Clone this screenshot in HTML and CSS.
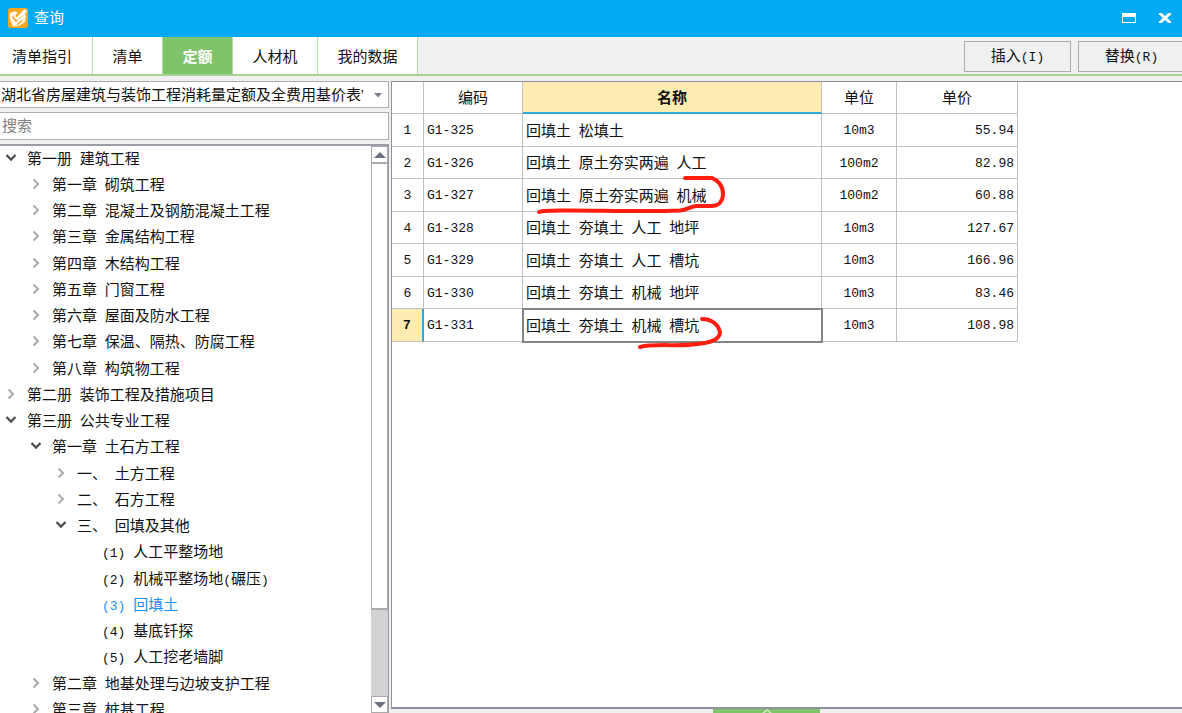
FILE: index.html
```html
<!DOCTYPE html>
<html lang="zh-CN">
<head>
<meta charset="utf-8">
<title>查询</title>
<link rel="stylesheet" href="styles.css">
</head>
<body>
<div class="window">
  <header class="titlebar">
    <svg class="logo" viewBox="0 0 20 20" aria-hidden="true">
      <rect width="20" height="20" rx="3" fill="#f9a51c"/>
      <path d="M2 5 7 3 10 4.500 7.500 7.500 9 10.500 15 4.500 18 7 17 14 11 18 5 18.500 2.500 13 1.500 9Z" fill="#fff6e6"/>
      <path d="M4.500 8.500 8 13 15.500 6.500M9 17 14 12.500" fill="none" stroke="#f6a023" stroke-width="1.300"/>
      <path d="M16.500 1 19 3.500 10.500 11.500 8.500 12 8.500 9.500Z" fill="#fff"/>
    </svg>
    <h1 class="title">查询</h1>
    <button class="winbtn" aria-label="最大化"><svg width="14" height="10" viewBox="0 0 14 10"><path d="M0 0H14V10H0ZM1 4V9H13V4Z" fill="#fff" fill-rule="evenodd"/></svg></button>
    <button class="winbtn" aria-label="关闭"><svg width="14" height="10" viewBox="0 0 14 10"><path d="M1.500 0 12.500 10M12.500 0 1.500 10" stroke="#fff" stroke-width="3"/></svg></button>
  </header>

  <nav class="toolbar">
    <button class="tab tab-guide">清单指引</button>
    <button class="tab tab-short">清单</button>
    <button class="tab tab-short active">定额</button>
    <button class="tab tab-mid">人材机</button>
    <button class="tab tab-long">我的数据</button>
    <div class="actions">
      <button class="action">插入<span class="mono">(I)</span></button>
      <button class="action">替换<span class="mono">(R)</span></button>
    </div>
  </nav>

  <main class="content">
    <aside class="sidebar">
      <div class="picker">
        <select class="library" aria-label="定额库"><option>湖北省房屋建筑与装饰工程消耗量定额及全费用基价表'</option></select>
        <svg class="caret" width="8" height="5" viewBox="0 0 8 5" aria-hidden="true"><path d="M0 0H8L4 4.500Z" fill="#7b7f8a"/></svg>
      </div>
      <input class="search" type="text" placeholder="搜索" aria-label="搜索">
      <div class="treebox">
        <svg class="defs" width="0" height="0" aria-hidden="true">
          <symbol id="open" viewBox="0 0 12 12"><path d="M1.500 3 6 7.500 10.500 3" fill="none" stroke="#4d4d4d" stroke-width="2.300"/></symbol>
          <symbol id="shut" viewBox="0 0 12 12"><path d="M3.500 1.500 8 6 3.500 10.500" fill="none" stroke="#ababab" stroke-width="2"/></symbol>
        </svg>
        <ul class="tree">
          <li class="l0"><svg class="chev"><use href="#open"/></svg>第一册 <span class="part">建筑工程</span></li>
          <li class="l1"><svg class="chev"><use href="#shut"/></svg>第一章 <span class="part">砌筑工程</span></li>
          <li class="l1"><svg class="chev"><use href="#shut"/></svg>第二章 <span class="part">混凝土及钢筋混凝土工程</span></li>
          <li class="l1"><svg class="chev"><use href="#shut"/></svg>第三章 <span class="part">金属结构工程</span></li>
          <li class="l1"><svg class="chev"><use href="#shut"/></svg>第四章 <span class="part">木结构工程</span></li>
          <li class="l1"><svg class="chev"><use href="#shut"/></svg>第五章 <span class="part">门窗工程</span></li>
          <li class="l1"><svg class="chev"><use href="#shut"/></svg>第六章 <span class="part">屋面及防水工程</span></li>
          <li class="l1"><svg class="chev"><use href="#shut"/></svg>第七章 <span class="part">保温、隔热、防腐工程</span></li>
          <li class="l1"><svg class="chev"><use href="#shut"/></svg>第八章 <span class="part">构筑物工程</span></li>
          <li class="l0"><svg class="chev"><use href="#shut"/></svg>第二册 <span class="part">装饰工程及措施项目</span></li>
          <li class="l0"><svg class="chev"><use href="#open"/></svg>第三册 <span class="part">公共专业工程</span></li>
          <li class="l1"><svg class="chev"><use href="#open"/></svg>第一章 <span class="part">土石方工程</span></li>
          <li class="l2"><svg class="chev"><use href="#shut"/></svg>一、 <span class="part">土方工程</span></li>
          <li class="l2"><svg class="chev"><use href="#shut"/></svg>二、 <span class="part">石方工程</span></li>
          <li class="l2"><svg class="chev"><use href="#open"/></svg>三、 <span class="part">回填及其他</span></li>
          <li class="l3"><span class="mono">(1)</span> <span class="part">人工平整场地</span></li>
          <li class="l3"><span class="mono">(2)</span> <span class="part">机械平整场地<span class="mono">(</span>碾压<span class="mono">)</span></span></li>
          <li class="l3 current"><span class="mono">(3)</span> <span class="part">回填土</span></li>
          <li class="l3"><span class="mono">(4)</span> <span class="part">基底钎探</span></li>
          <li class="l3"><span class="mono">(5)</span> <span class="part">人工挖老墙脚</span></li>
          <li class="l1"><svg class="chev"><use href="#shut"/></svg>第二章 <span class="part">地基处理与边坡支护工程</span></li>
          <li class="l1"><svg class="chev"><use href="#shut"/></svg>第三章 <span class="part">桩基工程</span></li>
        </ul>
        <div class="scroll">
          <button class="arrow" aria-label="向上滚动"><svg width="12" height="6" viewBox="0 0 12 6"><path d="M0 6 6 0 12 6Z" fill="#6a7080"/></svg></button>
          <div class="thumb"></div>
          <div class="track"></div>
          <button class="arrow" aria-label="向下滚动"><svg width="12" height="6" viewBox="0 0 12 6"><path d="M0 0H12L6 6Z" fill="#6a7080"/></svg></button>
        </div>
      </div>
    </aside>

    <section class="main">
      <div class="sheet">
        <table class="grid">
          <colgroup><col class="c-idx"><col class="c-code"><col class="c-name"><col class="c-unit"><col class="c-price"></colgroup>
          <thead>
            <tr><th></th><th>编码</th><th class="sorted">名称</th><th>单位</th><th>单价</th></tr>
          </thead>
          <tbody>
            <tr><td class="idx">1</td><td class="code">G1-325</td><td class="name">回填土 <span class="part">松填土</span></td><td class="unit">10m3</td><td class="price">55.94</td></tr>
            <tr><td class="idx">2</td><td class="code">G1-326</td><td class="name">回填土 <span class="part">原土夯实两遍</span> <span class="part">人工</span></td><td class="unit">100m2</td><td class="price">82.98</td></tr>
            <tr><td class="idx">3</td><td class="code">G1-327</td><td class="name">回填土 <span class="part">原土夯实两遍</span> <span class="part">机械</span></td><td class="unit">100m2</td><td class="price">60.88</td></tr>
            <tr><td class="idx">4</td><td class="code">G1-328</td><td class="name">回填土 <span class="part">夯填土</span> <span class="part">人工</span> <span class="part">地坪</span></td><td class="unit">10m3</td><td class="price">127.67</td></tr>
            <tr><td class="idx">5</td><td class="code">G1-329</td><td class="name">回填土 <span class="part">夯填土</span> <span class="part">人工</span> <span class="part">槽坑</span></td><td class="unit">10m3</td><td class="price">166.96</td></tr>
            <tr><td class="idx">6</td><td class="code">G1-330</td><td class="name">回填土 <span class="part">夯填土</span> <span class="part">机械</span> <span class="part">地坪</span></td><td class="unit">10m3</td><td class="price">83.46</td></tr>
            <tr class="picked"><td class="idx">7</td><td class="code">G1-331</td><td class="name">回填土 <span class="part">夯填土</span> <span class="part">机械</span> <span class="part">槽坑</span></td><td class="unit">10m3</td><td class="price">108.98</td></tr>
          </tbody>
        </table>
        <svg class="marks" width="360" height="280" viewBox="392 82 360 280" aria-hidden="true">
          <path d="M685 178H712C719 181 723 186 723 194C723 202 718 206 711 206H697C691 206 687 210 680 210.500C640 212 590 210 560 210.500C550 211 544 210 539 212"/>
          <path d="M702 319C712 319 719 325 720 333C719 341 707 343 697 344C680 347 655 343 640 347"/>
        </svg>
      </div>
      <div class="footer">
        <button class="expander" aria-label="展开"><svg width="12" height="8" viewBox="0 0 12 8"><path d="M1 5 6 1 11 5M3 8 6 5 9 8" fill="none" stroke="#cdeabf" stroke-width="1.500"/></svg></button>
      </div>
    </section>
  </main>
</div>
</body>
</html>
```
FILE: styles.css
```css
* { box-sizing: border-box; }
body {
  margin: 0;
  font: 15px/20px "Liberation Serif", "Noto Sans CJK SC", sans-serif;
  color: #111;
  background: #f0f0f0;
}
button, input, select { font: inherit; color: inherit; border-radius: 0; }
button { padding: 0; border: 0; background: none; }
.mono { font-family: "Liberation Mono", monospace; font-size: 13px; }
.part { margin-left: 4px; }

.window { display: flex; flex-direction: column; height: 100vh; overflow: hidden; }

.titlebar { display: flex; align-items: center; flex: none; height: 37px; padding: 0 10px 2px 8px; background: #02a9f3; color: #fff; }
.logo { width: 20px; height: 20px; margin-right: 6px; }
.title { flex: 1; margin: 0; font-size: 15px; font-weight: 400; }
.winbtn { display: flex; justify-content: center; width: 14px; margin-left: 22px; }

.toolbar { display: flex; flex: none; height: 39px; border-bottom: 2px solid #a3d494; overflow: hidden; }
.tab { flex: none; padding-top: 2px; background: #fff; border-right: 1px solid #b0e0a0; }
.tab.active { background: #7fc46b; color: #fff; font-weight: 700; }
.tab-guide { width: 93px; padding-right: 8px; }
.tab-short { width: 70px; }
.tab-mid { width: 85px; }
.tab-long { width: 100px; }
.actions { display: flex; flex: none; gap: 7px; margin: 4px 0 2px auto; }
.action { width: 107px; border: 1px solid #adadad; background: #f0f0f0; }
.action:last-child { margin-right: -3px; }

.content { display: flex; flex: 1; gap: 2px; min-height: 0; padding-top: 5px; }
.sidebar { display: flex; flex-direction: column; flex: none; width: 389px; }
.picker { display: flex; position: relative; }
.library { flex: 1; width: 100%; height: 27px; padding: 0 22px 0 1px; border: 1px solid #adadad; border-left: 0; background: #fff; appearance: none; overflow: hidden; }
.caret { position: absolute; right: 7px; top: 12px; pointer-events: none; }
.search { height: 28px; margin: 4px 0; padding: 0 2px; border: 1px solid #adadad; border-left: 0; background: #fff; }
.search::placeholder { color: #808080; opacity: 1; }

.treebox { display: flex; flex: 1; min-height: 0; border: 1px solid #9a9da5; border-width: 2px 1px 0 0; background: #fff; }
.defs { position: absolute; }
.tree { flex: 1; margin: 0; padding: 0; list-style: none; overflow: hidden; white-space: nowrap; }
.tree li { display: block; height: 26px; line-height: 26px; }
.tree li:nth-child(4n) { height: 27px; }
.chev { width: 12px; height: 12px; margin-right: 10px; }
.l0 { padding-left: 5px; }
.l1 { padding-left: 30px; }
.l2 { padding-left: 55px; }
.l3 { padding-left: 102px; }
.current { color: #1890f5; }

.scroll { display: flex; flex-direction: column; flex: none; width: 17px; background: #d2d2d2; }
.arrow { display: flex; align-items: center; justify-content: center; flex: none; height: 17px; border: 1px solid #aaa; background: #fff; }
.thumb { flex: 449; border: 1px solid #aaa; border-bottom-width: 2px; background: #fff; }
.track { flex: 87; }

.main { display: flex; flex-direction: column; flex: 1; min-width: 0; }
.sheet { position: relative; flex: 1; border: 1px solid #8e9199; border-right: 0; border-bottom-width: 2px; background: #fff; overflow: hidden; }
.grid { table-layout: fixed; width: 626px; border-collapse: separate; border-spacing: 0; }
.c-idx { width: 32px; }
.c-code { width: 99px; }
.c-name { width: 299px; }
.c-unit { width: 75px; }
.c-price { width: 121px; }
.grid th, .grid td { height: 32px; padding: 1px 3px 0; border: solid #c0c0c0; border-width: 0 1px 1px 0; font-weight: 400; white-space: nowrap; }
.grid tbody tr:nth-child(odd) td { height: 33px; }
.grid .sorted { background: #ffecb3; border-bottom: 2px solid #2fa8dc; font-weight: 700; }
.grid td.idx, .grid td.code, .grid td.unit, .grid td.price { padding-top: 2px; font-family: "Liberation Mono", monospace; font-size: 13px; }
.idx, .unit { text-align: center; }
.price { text-align: right; }
.grid .picked .idx { background: #ffecb3; border-right: 2px solid #2fa8dc; font-weight: 700; }
.picked .name { outline: 2px solid #858585; outline-offset: -1px; }
.marks { position: absolute; left: 0; top: 0; fill: none; stroke: #ff1e10; stroke-width: 4; stroke-linecap: round; stroke-linejoin: round; }

.footer { display: flex; justify-content: center; flex: none; height: 4px; padding-right: 40px; overflow: hidden; }
.expander { display: flex; justify-content: center; width: 107px; height: 12px; background: #7fc46b; }
```
